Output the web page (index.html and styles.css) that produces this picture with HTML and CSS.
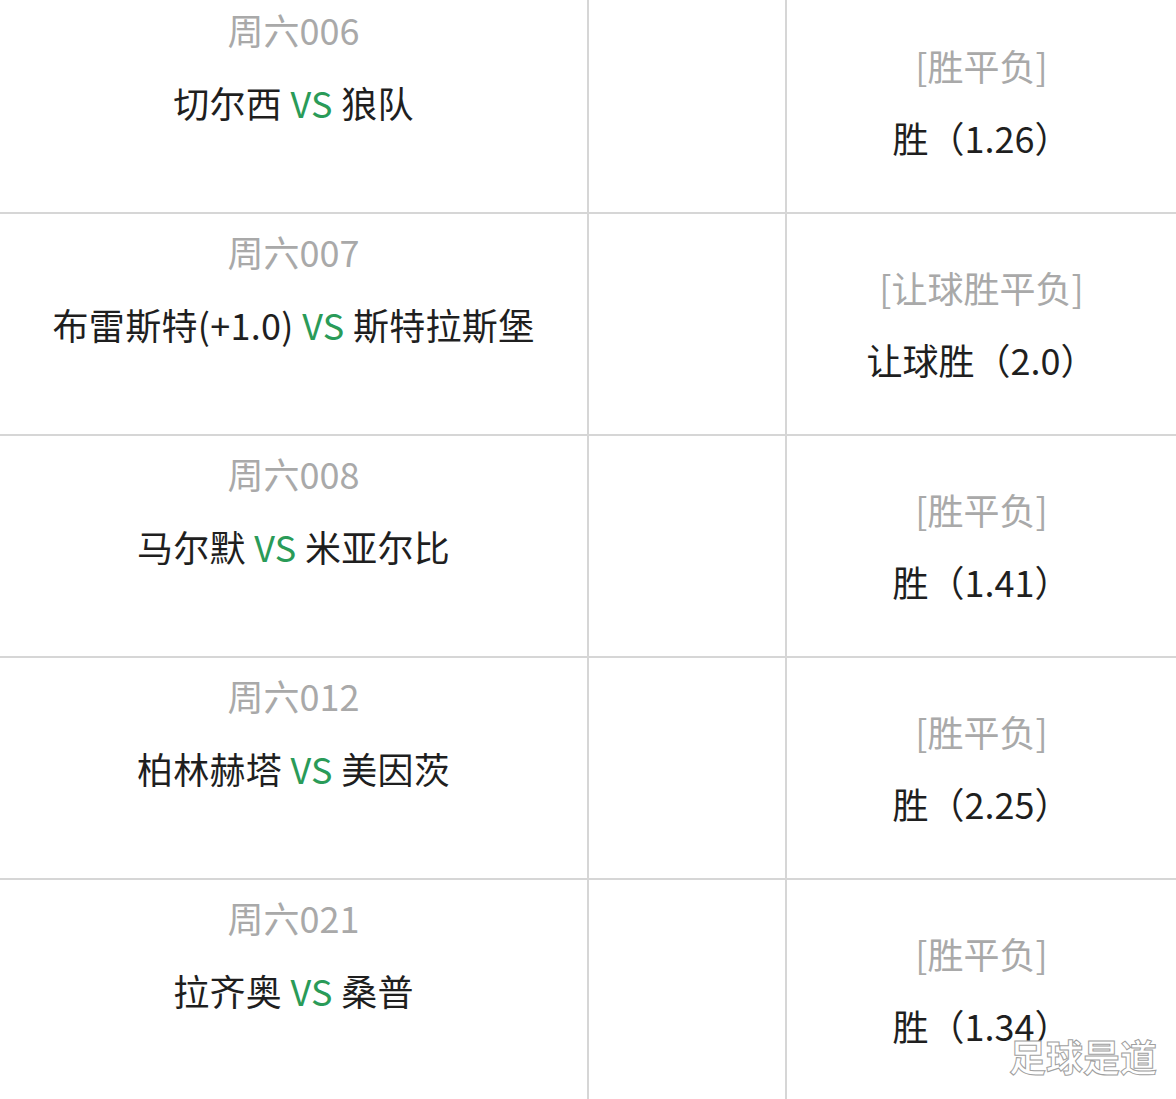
FILE: index.html
```html
<!DOCTYPE html>
<html lang="zh-CN">
<head>
<meta charset="utf-8">
<title>竞彩推荐</title>
<link rel="stylesheet" href="styles.css">
</head>
<body>
<div class="table">
  <div class="row">
    <div class="cell match">
      <div class="date">周六006</div>
      <div class="teams">切尔西 <span class="vs">VS</span> 狼队</div>
    </div>
    <div class="cell blank"></div>
    <div class="cell pick">
      <div class="type">[胜平负]</div>
      <div class="value">胜（1.26）</div>
    </div>
  </div>
  <div class="row">
    <div class="cell match">
      <div class="date">周六007</div>
      <div class="teams">布雷斯特(+1.0) <span class="vs">VS</span> 斯特拉斯堡</div>
    </div>
    <div class="cell blank"></div>
    <div class="cell pick">
      <div class="type">[让球胜平负]</div>
      <div class="value">让球胜（2.0）</div>
    </div>
  </div>
  <div class="row">
    <div class="cell match">
      <div class="date">周六008</div>
      <div class="teams">马尔默 <span class="vs">VS</span> 米亚尔比</div>
    </div>
    <div class="cell blank"></div>
    <div class="cell pick">
      <div class="type">[胜平负]</div>
      <div class="value">胜（1.41）</div>
    </div>
  </div>
  <div class="row">
    <div class="cell match">
      <div class="date">周六012</div>
      <div class="teams">柏林赫塔 <span class="vs">VS</span> 美因茨</div>
    </div>
    <div class="cell blank"></div>
    <div class="cell pick">
      <div class="type">[胜平负]</div>
      <div class="value">胜（2.25）</div>
    </div>
  </div>
  <div class="row">
    <div class="cell match">
      <div class="date">周六021</div>
      <div class="teams">拉齐奥 <span class="vs">VS</span> 桑普</div>
    </div>
    <div class="cell blank"></div>
    <div class="cell pick">
      <div class="type">[胜平负]</div>
      <div class="value">胜（1.34）</div>
    </div>
  </div>
</div>
<div class="watermark">足球是道</div>
</body>
</html>
```
FILE: styles.css
```css
html, body {
  margin: 0;
  padding: 0;
  background: #ffffff;
}
body {
  width: 1176px;
  height: 1099px;
  overflow: hidden;
  position: relative;
  font-family: "Noto Sans CJK SC", "Noto Sans", sans-serif;
  font-size: 36px;
  color: #1f1f1f;
}
.table {
  margin-top: -10px;
  display: flex;
  flex-direction: column;
}
.row {
  display: grid;
  grid-template-columns: 589px 198px 1fr;
  height: 220px;
  border-top: 2px solid #d6d6d6;
}
.cell {
  text-align: center;
  white-space: nowrap;
}
.match {
  border-right: 2px solid #d6d6d6;
  padding-top: 1px;
  line-height: 73px;
}
.teams {
  letter-spacing: 0.3px;
}
.blank {
  border-right: 2px solid #d6d6d6;
}
.pick {
  padding-top: 37px;
  line-height: 72px;
}
.date, .type {
  color: #a9a9a9;
}
.vs {
  color: #2a9b58;
}
.watermark {
  position: absolute;
  right: 19px;
  top: 1032px;
  font-size: 37px;
  line-height: 48px;
  font-weight: 700;
  color: #ffffff;
  -webkit-text-stroke: 1px #a0a0a0;
  letter-spacing: 0;
}
```
